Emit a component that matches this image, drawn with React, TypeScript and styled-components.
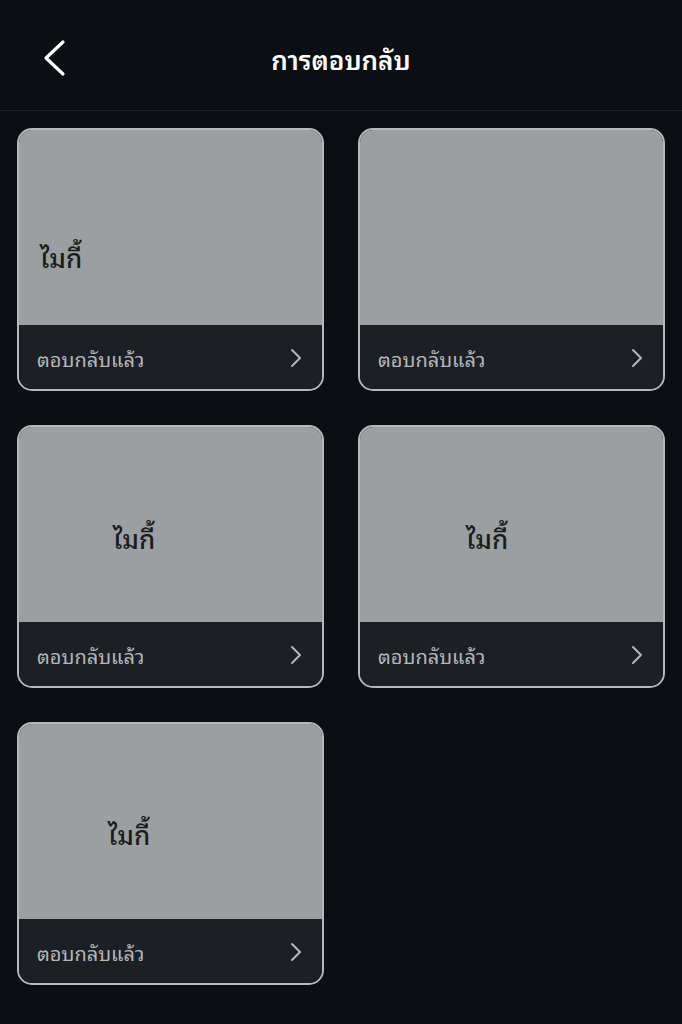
import React from 'react';
import styled, {createGlobalStyle} from "styled-components";

const GlobalStyle = createGlobalStyle`
  html, body {
    margin: 0;
    padding: 0;
    background: #0b0f13;
  }
  body {
    font-family: "Noto Sans Thai Looped", "Loma", "Garuda", "Waree", "Sarabun", "Noto Sans Thai", "Noto Sans", "DejaVu Sans", sans-serif;
  }
`

type Card = {
    label?: string
    top: number
    left: number
}

const cards: Card[] = [
    {label: "ไมกี้", top: 113, left: 21},
    {top: 0, left: 0},
    {label: "ไมกี้", top: 97, left: 94},
    {label: "ไมกี้", top: 97, left: 106},
    {label: "ไมกี้", top: 96, left: 89},
]

const BackIcon = () => (
    <svg width="24" height="38" viewBox="0 0 24 38">
        <polyline points="20,3 3,19 20,35" fill="none" stroke="#fff" strokeWidth="3.2"
                  strokeLinecap="round" strokeLinejoin="round"/>
    </svg>
)

const ChevronIcon = () => (
    <svg width="14" height="20" viewBox="0 0 14 20">
        <polyline points="3,2 11,10 3,18" fill="none" stroke="#b4b7ba" strokeWidth="2"
                  strokeLinecap="round" strokeLinejoin="round"/>
    </svg>
)

export default function App() {
    return (
        <>
            <GlobalStyle/>
            <StyledPage>
                <StyledHeader>
                    <StyledBack><BackIcon/></StyledBack>
                    <StyledTitle>การตอบกลับ</StyledTitle>
                </StyledHeader>
                <StyledGrid>
                    {cards.map((c, i) => (
                        <StyledCard key={i}>
                            <StyledPreview>
                                {c.label && (
                                    <StyledPreviewText style={{paddingTop: c.top, paddingLeft: c.left}}>
                                        {c.label}
                                    </StyledPreviewText>
                                )}
                            </StyledPreview>
                            <StyledFooter>
                                <StyledStatus>ตอบกลับแล้ว</StyledStatus>
                                <ChevronIcon/>
                            </StyledFooter>
                        </StyledCard>
                    ))}
                </StyledGrid>
            </StyledPage>
        </>
    )
}

const StyledPage = styled.div`
  min-height: 100vh;
  background: #0b0f13;
`

const StyledHeader = styled.header`
  position: relative;
  height: 110px;
  display: flex;
  align-items: center;
  justify-content: center;
  border-bottom: 1px solid #1c2024;
`

const StyledBack = styled.div`
  position: absolute;
  left: 43px;
  top: 39px;
  display: flex;
`

const StyledTitle = styled.h1`
  margin: 0;
  color: #ffffff;
  font-size: 26px;
  font-weight: 600;
  line-height: 1;
  transform: translateY(3px);
`

const StyledGrid = styled.div`
  display: grid;
  grid-template-columns: 307px 307px;
  column-gap: 34px;
  row-gap: 34px;
  padding: 17px 17px 0 17px;
`

const StyledCard = styled.div`
  height: 263px;
  border-radius: 15px;
  border: 2px solid #b6b9bc;
  overflow: hidden;
  display: flex;
  flex-direction: column;
  box-sizing: border-box;
  background: #1c1f23;
`

const StyledPreview = styled.div`
  height: 195px;
  flex: none;
  background: #9b9fa1;
  box-sizing: border-box;
`

const StyledPreviewText = styled.div`
  color: #1a1c1e;
  font-size: 26px;
  font-weight: 500;
  line-height: 1;
`

const StyledFooter = styled.div`
  flex: 1;
  display: flex;
  align-items: center;
  justify-content: space-between;
  padding: 1px 19px 0 18px;
  background: #1c1f23;
`

const StyledStatus = styled.span`
  color: #b4b7ba;
  font-size: 20px;
  line-height: 1;
`
